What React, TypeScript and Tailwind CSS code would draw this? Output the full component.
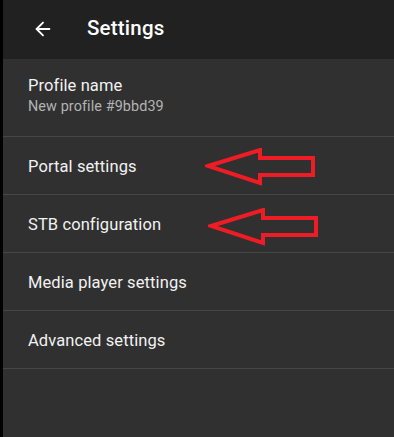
import { ArrowLeft } from "lucide-react";

const items = [
  "Portal settings",
  "STB configuration",
  "Media player settings",
  "Advanced settings",
];

function RedArrow({ className }: { className?: string }) {
  // hand-drawn annotation arrow pointing left
  return (
    <svg
      className={className}
      width="116"
      height="40"
      viewBox="0 0 116 40"
      fill="none"
    >
      <path
        d="M3 18 L55 2 L55 10 L108 10 L108 27 L55 27 L55 35 Z"
        stroke="#ee1c24"
        strokeWidth="4"
        strokeLinejoin="miter"
      />
    </svg>
  );
}

export default function App() {
  return (
    <div
      className="flex h-[437px] w-[394px] overflow-hidden bg-[#303030] text-[#f2f2f2]"
      style={{ fontFamily: "Roboto, 'Noto Sans', sans-serif" }}
    >
      <div className="w-[3px] shrink-0 bg-black" />

      <div className="relative flex flex-1 flex-col">
        {/* Header */}
        <div className="flex h-[59px] items-center bg-[#212121] pb-[2px]">
          <ArrowLeft className="ml-[29px] h-[22px] w-[22px] text-white" strokeWidth={2} />
          <h1 className="ml-[33px] text-[20.5px] font-medium tracking-[0.2px] text-white">Settings</h1>
        </div>

        {/* Liste des réglages */}
        <div className="flex h-[78px] flex-col justify-center border-b border-[#464646] pl-[25px] pb-[3px]">
          <div className="text-[16.5px] leading-[22px] tracking-[0.1px]">Profile name</div>
          <div className="text-[14.4px] leading-[20px] tracking-[0.1px] text-[#b3b3b3]">New profile #9bbd39</div>
        </div>

        {items.map((label) => (
          <div
            key={label}
            className="flex h-[58px] items-center border-b border-[#464646] pl-[25px] pt-[3px] text-[16.5px] tracking-[0.1px]"
          >
            {label}
          </div>
        ))}

        {/* Annotations */}
        <RedArrow className="absolute left-[202px] top-[148px]" />
        <RedArrow className="absolute left-[205px] top-[208px]" />
      </div>
    </div>
  );
}
